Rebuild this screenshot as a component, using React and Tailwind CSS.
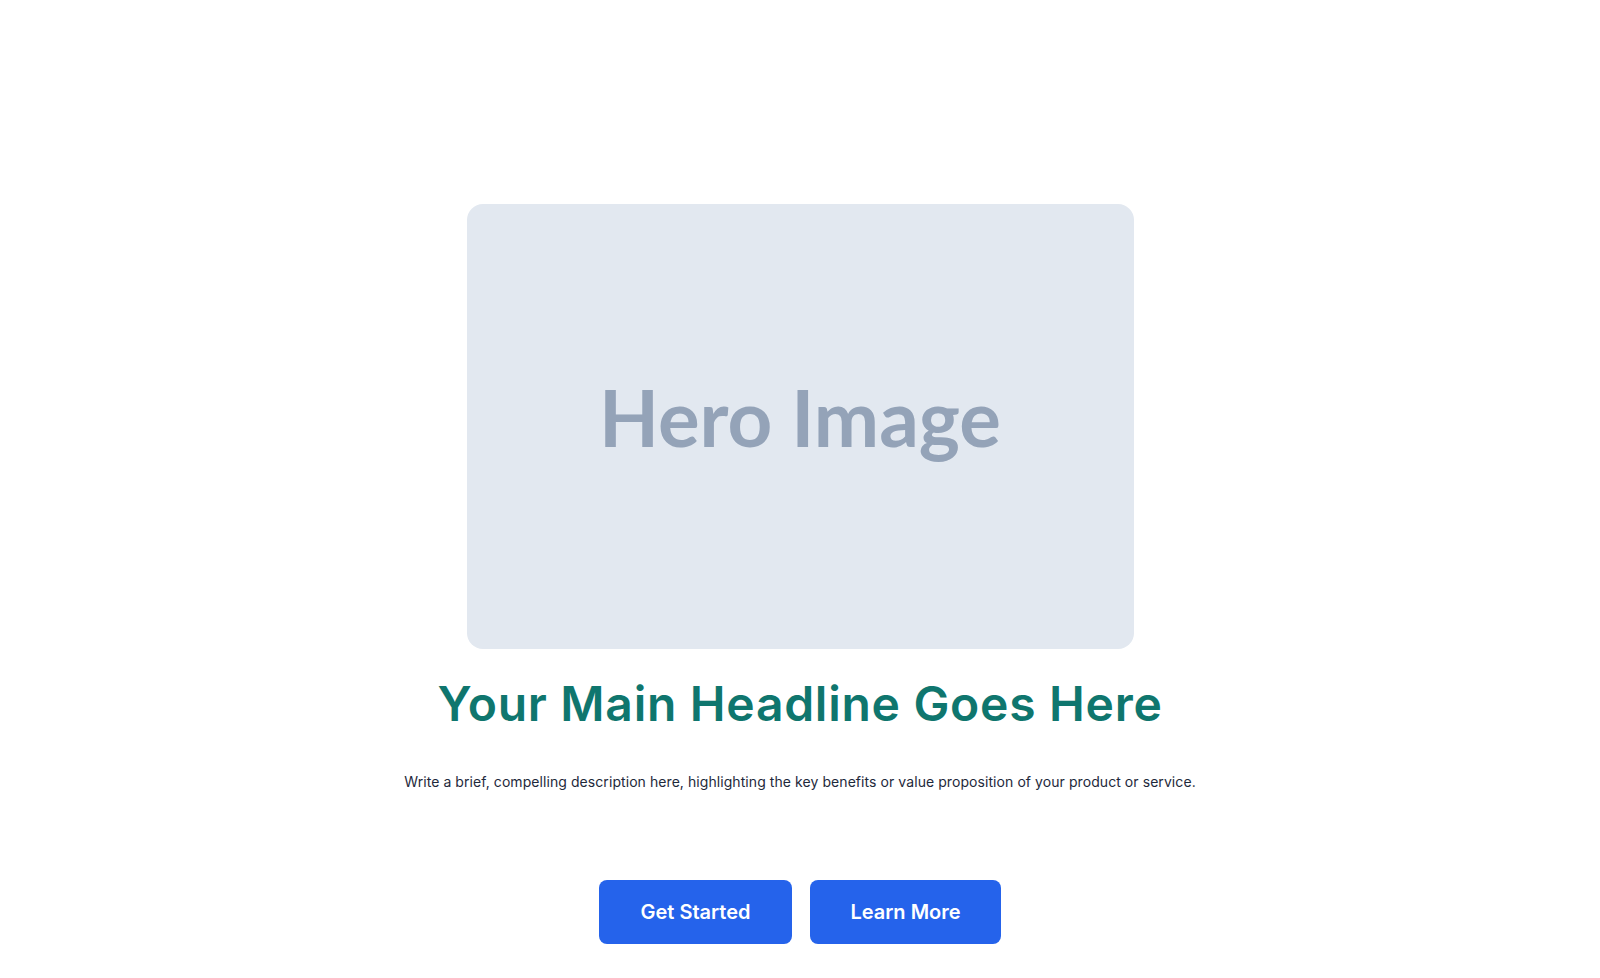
import React from 'react';

const Hero = () => {
  return (
    <section className="min-h-screen bg-white flex flex-col items-center pt-[204px] font-['Inter',sans-serif]">
      <div className="w-[667px] h-[445px] rounded-2xl bg-[#e2e8f0] flex items-center justify-center">
        <span className="font-['Lato',sans-serif] font-bold text-[78px] text-[#94a3b8] -mt-[19px]">
          Hero Image
        </span>
      </div>

      <h1 className="mt-[25px] text-[48px] leading-[60px] font-semibold text-[#0f766e] tracking-[0.015em]">
        Your Main Headline Goes Here
      </h1>

      <p className="mt-[36px] text-sm leading-6 text-[#1e293b] tracking-[0.005em]">
        Write a brief, compelling description here, highlighting the key benefits or value proposition of your product or service.
      </p>

      <div className="mt-[86px] flex gap-[18px]">
        <button className="w-[193px] h-[64px] rounded-lg bg-[#2563eb] text-white text-[20px] font-semibold">
          Get Started
        </button>
        <button className="w-[191px] h-[64px] rounded-lg bg-[#2563eb] text-white text-[20px] font-semibold">
          Learn More
        </button>
      </div>
    </section>
  );
};

export default function App() {
  return <Hero />;
}
